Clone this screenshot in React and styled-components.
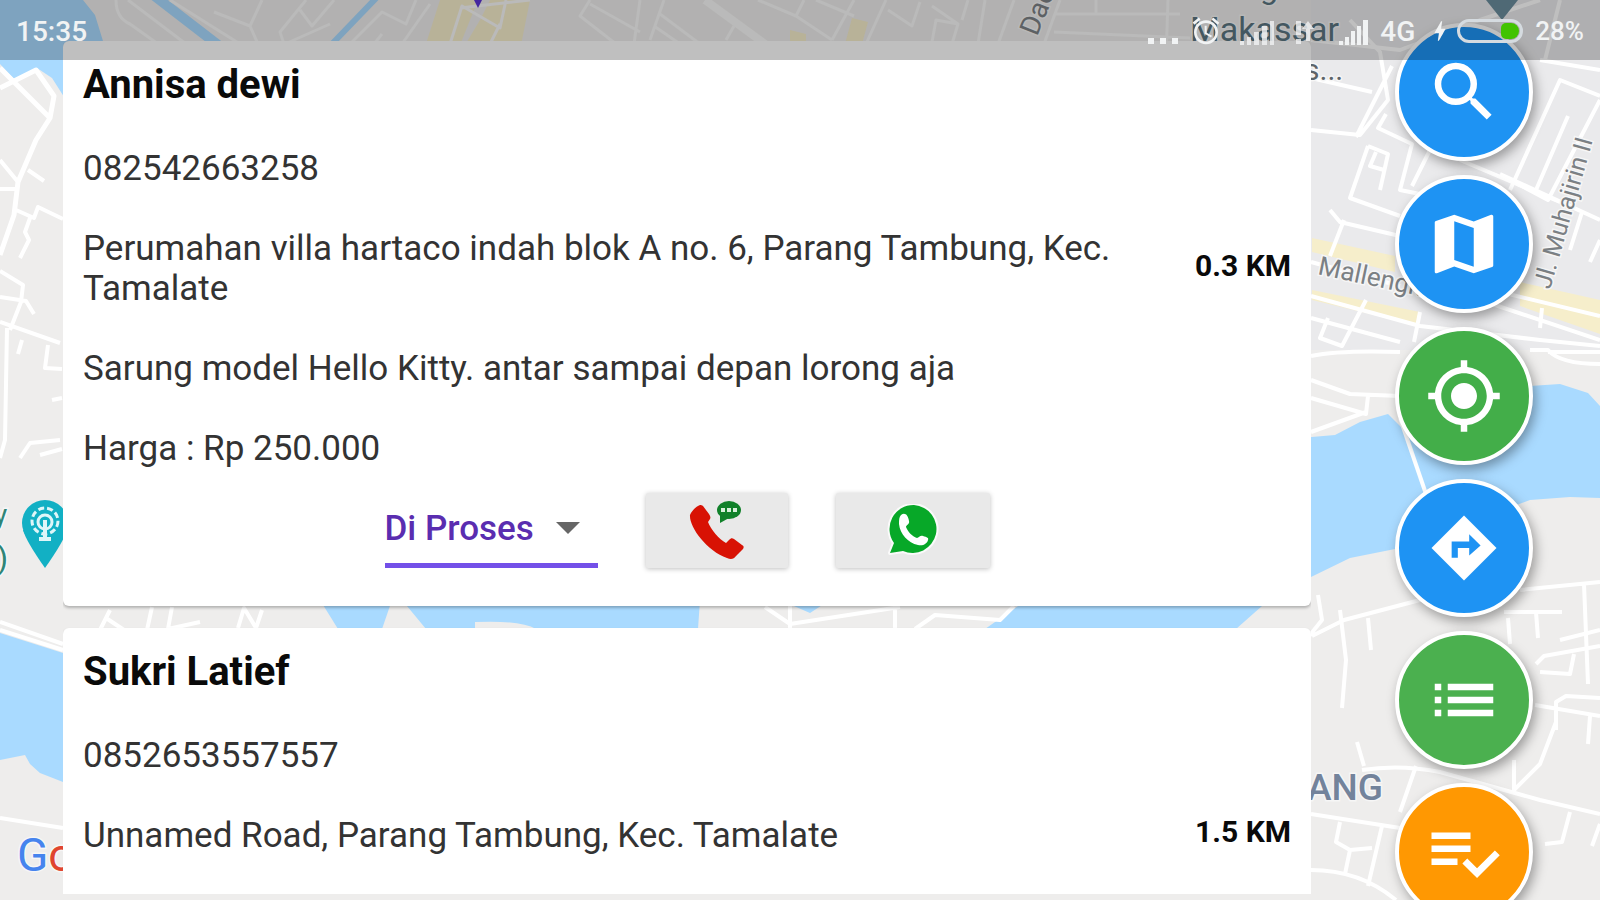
import React, { useState } from "react";
import styled, { createGlobalStyle } from "styled-components";
import {
  MdAccessAlarm,
  MdBolt,
  MdList,
  MdMap,
  MdMyLocation,
  MdSearch,
} from "react-icons/md";

const orders = [
  {
    id: 1,
    name: "Annisa dewi",
    phone: "082542663258",
    address:
      "Perumahan villa hartaco indah blok A no. 6, Parang Tambung, Kec. Tamalate",
    note: "Sarung model Hello Kitty. antar sampai depan lorong aja",
    price: "Harga : Rp 250.000",
    distance: "0.3 KM",
  },
  {
    id: 2,
    name: "Sukri Latief",
    phone: "0852653557557",
    address: "Unnamed Road, Parang Tambung, Kec. Tamalate",
    distance: "1.5 KM",
  },
];

const PlaylistCheckIcon = () => (
  <svg viewBox="0 0 24 24" fill="currentColor" aria-hidden="true">
    <path d="M14 10H2v2h12v-2zm0-4H2v2h12V6zM2 16h8v-2H2v2zm19.5-4.5L23 13l-6.99 7-4.51-4.5L13 14l3.01 3 5.49-5.5z" />
  </svg>
);

const DirectionsIcon = () => (
  <svg viewBox="0 0 24 24" fill="currentColor" aria-hidden="true">
    <path
      fillRule="evenodd"
      d="M12 2 L22 12 L12 22 L2 12 Z M13.6 14.3 L17.1 11.2 L13.6 7.8 V10 H8.2 V15 H10.1 V12 H13.6 Z"
    />
  </svg>
);

const PhoneIcon = () => (
  <svg width="56" height="62" viewBox="0 1 56 62" aria-hidden="true">
    <path
      d="M11 6 C8 7 3 11 1 16 C0 28 18 52 38 59 C42 61 45 60 47 57 L54 50 C55 48 55 47 53 46 L45 40 C43 39 42 39 40 41 L37 44 C30 40 22 31 19 23 L21 20 C22 18 21 17 20 15 L14 7 C13 6 12 6 11 6 Z"
      fill="#d81204"
    />
    <ellipse cx="40" cy="11" rx="12" ry="9" fill="#11812a" />
    <path d="M31 16 L31 24 L40 19 Z" fill="#11812a" />
    <g fill="#d9f0dc">
      <rect x="32" y="9" width="4" height="4" />
      <rect x="38" y="9" width="4" height="4" />
      <rect x="44" y="9" width="4" height="4" />
    </g>
  </svg>
);

const WhatsappIcon = () => (
  <svg width="54" height="54" viewBox="0 1 54 54" aria-hidden="true">
    <path
      d="M28 2 a24 24 0 1 1 -11 46 L4 50 L8 40 A24 24 0 0 1 28 2 Z"
      fill="#07a828"
      stroke="#fafafa"
      strokeWidth="4"
      strokeLinejoin="round"
      paintOrder="stroke"
    />
    <path
      d="M15 12 C19 9 22 12 23 18 C24 21 20 22 20 24 C22 29 26 33 31 35 C33 35 34 32 37 33 C41 34 43 35 42 37 C41 41 37 43 32 42 C22 40 14 31 13 21 C13 17 13 14 15 12 Z"
      fill="#fff"
    />
  </svg>
);

const MapView = () => (
  <MapCanvas viewBox="0 0 1600 900" preserveAspectRatio="xMidYMid slice" aria-hidden="true">
    <rect width="1600" height="900" fill="#eeedec" />
    <rect x="1311" width="289" height="350" fill="#eaeaec" />

    <g fill="#a9daff">
      <path d="M0 0 H83 L95 15 L103 41 V100 H66 L52 78 L37 68 L15 80 L0 64 Z" />
      <path d="M0 633 L63 653 V782 L40 773 L30 764 L25 755 L0 760 Z" />
      <path d="M1300 438 L1335 435 L1360 422 L1388 414 L1404 430 L1530 386 L1560 384 L1588 393 L1600 406 V498 L1570 497 L1530 500 L1400 548 L1350 558 L1311 577 H1300 Z" />
      <path d="M320 600 H392 L382 629 H338 Z" />
      <path d="M402 600 H700 L698 629 H536 Q520 620 475 622 V629 H426 Z" />
      <path d="M780 600 H830 L810 613 Z M1018 606 H1262 L1236 629 H985 Z" />
    </g>
    <g fill="none" stroke="#a9daff">
      <path d="M152 -6 L222 48" strokeWidth="10" />
      <path d="M382 -8 L330 46" strokeWidth="6" />
    </g>

    <g fill="#f6eecb">
      <path d="M440 0 H478 L458 50 H424 Z M490 0 H530 L520 50 H462 L480 20 Z" />
      <path d="M790 30 L806 34 V44 H790 Z M852 18 L868 22 L862 44 H845 Z" />
      <path d="M1312 238 L1395 256 V272 L1312 252 Z M1312 290 L1420 312 V326 L1312 300 Z" />
      <path d="M1520 282 L1600 300 V334 L1520 306 Z" />
    </g>

    <g fill="none" stroke="#fff" strokeWidth="4" strokeLinejoin="round">
      <path d="M0 68 L50 118 M0 88 L36 70 L54 96 L50 118 L36 140 L18 182 L14 215 L0 255" strokeWidth="5" />
      <path d="M0 160 L18 182 M0 189 H16 M28 170 L44 181 M16 210 L34 218 L38 207 L63 219 M30 218 L25 232 L29 240 L20 258" />
      <path d="M0 271 L23 285 L21 302 L10 330 M0 297 L26 301 L34 314 M0 322 L60 343 M7 328 L5 440 L0 458 M22 340 L18 354 M48 345 L45 368 L62 369" />
      <path d="M20 458 L30 443 L60 440 M40 455 L62 449 M52 400 L62 398" />
      <path d="M0 622 L63 644 M0 630 L63 650" />
      <path d="M0 818 L63 828 M110 610 L100 630 M106 618 L124 630 M152 607 L147 630 M172 607 L168 629 L200 622 M238 628 L244 608 L256 628 L262 610" />
      <path d="M765 607 L790 624 L900 607 M790 605 V628 M895 606 V629 M915 629 L935 615 L1000 620 L1014 606" />
      <path d="M1312 636 L1344 620 L1420 600 M1318 595 L1322 620 L1306 640" />
      <path d="M1340 610 L1346 660 L1342 708 M1368 618 L1371 650 M1357 742 L1364 766 M1311 814 L1400 828" />
      <path d="M1340 822 L1336 842 L1350 850 L1345 874 M1350 850 L1372 848 M1382 826 L1368 886 M1311 870 Q1360 870 1396 900" />
      <path d="M1362 770 Q1400 764 1440 772 L1540 800 L1600 814 M1416 766 L1400 812" />
      <path d="M1504 612 L1562 612 M1536 612 L1538 638 M1508 618 L1510 644 M1520 590 L1600 582 M1584 584 L1588 684" />
      <path d="M1560 640 L1600 630 M1536 664 L1544 656 L1600 646 M1540 672 L1570 674 L1574 654" />
      <path d="M1535 705 L1600 716 M1556 730 V702 L1566 696 L1600 698 M1590 716 L1588 744 M1556 722 L1540 764 L1514 790 V760" />
      <path d="M1570 812 L1562 842 L1545 844 M1600 824 L1592 846" />
      <path d="M1400 418 L1426 494" />
      <path d="M1311 130 L1360 135 L1388 100 L1380 52 L1350 20 M1356 137 L1392 66 M1311 78 L1372 92" />
      <path d="M1386 114 L1378 128 L1412 144 L1400 190 L1420 194 M1368 146 L1388 154 L1380 190 M1368 146 L1350 198 L1400 216" />
      <path d="M1376 152 L1370 166 L1384 170 M1330 210 L1340 222 L1400 236 M1344 220 L1330 256 M1430 150 L1412 186" />
      <path d="M1510 190 L1560 80 L1600 96 M1518 184 L1548 200 L1600 100 M1536 190 L1568 116 M1500 174 L1600 220 M1582 212 L1570 250" />
      <path d="M1460 160 L1560 202 M1600 240 L1590 262 M1311 262 L1400 286" />
      <path d="M1311 296 L1420 326 L1540 340 L1600 346 M1311 318 L1400 342 M1366 300 L1342 346 L1320 338 L1328 318 M1420 312 L1414 342" />
      <path d="M1311 356 Q1340 350 1400 352 M1311 380 L1350 394 L1400 396 M1368 396 L1366 414 L1311 398 M1311 432 L1366 412" />
      <path d="M1500 292 L1600 316 M1542 308 L1540 328 M1530 350 H1548 Q1560 364 1600 364 M1548 352 H1600" />
      <path d="M1480 300 L1600 340 M1311 40 L1400 50 L1480 20 L1540 0 M1540 60 L1600 70 M1560 0 L1545 60" />
    </g>

    {/* streets under the status bar */}
    <g fill="none" stroke="#f8f8f8" strokeWidth="3" strokeLinejoin="round">
      <path d="M116 0 Q116 18 130 24 L158 44 M170 0 L240 44 M128 0 L186 44 M214 12 L250 26 L262 0 M250 26 L258 44" />
      <path d="M306 0 L280 32 L284 44 M300 10 L312 26 L334 0 M330 24 L285 44 M350 44 L382 12 L406 24 L416 0 M430 4 L402 44 M374 44 L382 34" />
      <path d="M450 44 L462 6 L500 28 L506 0 M490 44 L500 24 M460 8 L530 0" />
      <path d="M590 0 L580 16 L616 44 M590 4 L640 32 M664 0 L650 40 M640 0 L634 44 M660 14 L700 44 M654 26 L680 44" />
      <path d="M705 0 L765 44" strokeWidth="8" />
      <path d="M758 0 L796 16 L832 40 M796 16 L804 0 M854 0 L832 40 M886 0 L866 44 M816 0 L854 16 M888 10 L912 26 L920 2 M726 40 L734 26" />
      <path d="M932 6 L958 24 L952 44 M958 24 L936 20 L932 42 L950 46 M968 0 L962 20 M985 0 L978 44 M1014 0 L998 44 M1060 0 L1044 44 M1056 14 H1180 M1054 32 L1190 38 M1096 0 V14 M1168 0 L1166 60" />
    </g>

    <path d="M474 0 H482 L478 8 Z" fill="#5b35d4" />
    <path d="M1486 0 H1518 L1502 20 Z" fill="#6a8c9c" />

    <circle cx="45" cy="523" r="23" fill="#12b0c4" />
    <path d="M23 530 Q26 541 45 568 Q64 541 67 530 Z" fill="#12b0c4" />
    <g fill="none" stroke="#dff6f8" strokeWidth="3">
      <circle cx="45" cy="521" r="13" strokeDasharray="6 3" />
      <circle cx="45" cy="522" r="7" />
      <path d="M45 520 V538 M39 539 H51" strokeWidth="4" />
    </g>

    <MapLabel x="-6" y="524" $size={28} $color="#2f8577">y</MapLabel>
    <MapLabel x="-3" y="569" $size={32} $color="#2f8577">)</MapLabel>
    <MapLabel x="1190" y="41" $size={34} $color="#5a7580">Makassar</MapLabel>
    <MapLabel x="1260" y="-1" $size={32} $color="#5a7580">g</MapLabel>
    <MapLabel x="1304" y="80" $size={30} $color="#5d6469">s...</MapLabel>
    <MapLabel x="1317" y="274" $size={26} $color="#7b8084" transform="rotate(12 1317 274)">
      Mallengk
    </MapLabel>
    <MapLabel x="1550" y="290" $size={25} $color="#7b8084" transform="rotate(-74 1550 290)">
      Jl. Muhajirin II
    </MapLabel>
    <MapLabel x="1037" y="37" $size={28} $color="#7d8286" transform="rotate(-68 1037 37)">
      Dae
    </MapLabel>
    <MapLabel x="1307" y="800" $size={37} $weight={500} $color="#73839b">ANG</MapLabel>
    <MapLabel x="17" y="871" $size={46} $color="#4684ee">
      G<tspan fill="#e0452f">o</tspan>
    </MapLabel>
  </MapCanvas>
);

const OrderCard = ({ order }) => {
  const [status, setStatus] = useState("Di Proses");

  return (
    <Card>
      <OrderBody>
        <Details>
          <Name>{order.name}</Name>
          <Line>{order.phone}</Line>
          <Line>{order.address}</Line>
          {order.note && <Line>{order.note}</Line>}
          {order.price && <Line>{order.price}</Line>}
        </Details>
        <Distance>{order.distance}</Distance>
      </OrderBody>
      {order.price && (
        <Actions>
          <StatusField>
            <StatusSelect
              aria-label="Status"
              value={status}
              onChange={(e) => setStatus(e.target.value)}
            >
              <option>Di Proses</option>
            </StatusSelect>
            <Caret />
          </StatusField>
          <ContactButton $width={142} aria-label="Telepon">
            <PhoneIcon />
          </ContactButton>
          <ContactButton $width={154} aria-label="WhatsApp">
            <WhatsappIcon />
          </ContactButton>
        </Actions>
      )}
    </Card>
  );
};

const App = () => {
  return (
    <Screen>
      <GlobalStyle />
      <MapView />
      <OrderList>
        {orders.map((order) => (
          <OrderCard key={order.id} order={order} />
        ))}
      </OrderList>
      <FabColumn>
        <Fab $color="#1e93f3" aria-label="Cari"><MdSearch /></Fab>
        <Fab $color="#1e93f3" aria-label="Peta"><MdMap /></Fab>
        <Fab $color="#43ae49" aria-label="Lokasi saya"><MdMyLocation /></Fab>
        <Fab $color="#1e93f3" aria-label="Rute"><DirectionsIcon /></Fab>
        <Fab $color="#4bb04f" aria-label="Daftar"><MdList /></Fab>
        <Fab $color="#ff9802" aria-label="Selesai"><PlaylistCheckIcon /></Fab>
      </FabColumn>
      <StatusBar>
        <Clock>15:35</Clock>
        <StatusIcons>
          <svg width="30" height="28" viewBox="0 0 30 28" fill="currentColor" aria-hidden="true">
            <rect x="0" y="21" width="6" height="6" />
            <rect x="12" y="21" width="6" height="6" />
            <rect x="24" y="21" width="6" height="6" />
          </svg>
          <MdAccessAlarm size={32} />
          <svg width="134" height="28" viewBox="-6 0 134 28" fill="currentColor" aria-hidden="true">
            <path d="M0 24h4v4h-4zM7 20h4v8h-4zM14 15h5v13h-5zM22 9h5v19h-5zM30 4h4v24h-4z" opacity=".8" />
            <path d="M56 4h5v14h-5zM56 22h5v5h-5zM68 4l6 8h-4v12h-4V12h-4z" opacity=".8" />
            <path d="M99 24h4v4h-4zM105 20h4v8h-4zM111 14h4v14h-4zM117 9h4v19h-4zM123 3h5v25h-5z" />
          </svg>
          <Network>4G</Network>
          <ChargeGroup>
            <MdBolt size={26} />
            <Battery><BatteryLevel /></Battery>
          </ChargeGroup>
          <Percent>28%</Percent>
        </StatusIcons>
      </StatusBar>
    </Screen>
  );
};

export default App;

const GlobalStyle = createGlobalStyle`
  * {
    box-sizing: border-box;
  }

  body {
    margin: 0;
    font-family: Roboto, "Liberation Sans", sans-serif;
  }
`;

const Screen = styled.div`
  position: relative;
  display: flex;
  height: 100vh;
  overflow: hidden;
`;

const MapCanvas = styled.svg`
  position: absolute;
  inset: 0;
  width: 100%;
  height: 100%;
`;

const MapLabel = styled.text`
  font-size: ${({ $size }) => $size}px;
  font-weight: ${({ $weight }) => $weight || 400};
  fill: ${({ $color }) => $color};
  stroke: #f6f6f6;
  stroke-width: 3px;
  paint-order: stroke;
`;

const StatusBar = styled.header`
  position: absolute;
  inset: 0 0 auto;
  display: flex;
  align-items: center;
  justify-content: space-between;
  height: 60px;
  padding: 2px 16px 0;
  background: rgba(0, 0, 0, 0.25);
  color: #f1f3f4;
  font-size: 28px;
  font-weight: 500;
`;

const Clock = styled.time``;

const StatusIcons = styled.div`
  display: flex;
  align-items: center;
  gap: 12px;
`;

const Network = styled.span``;

const Percent = styled.span`
  font-size: 26px;
`;

const ChargeGroup = styled.div`
  display: flex;
  align-items: center;
  gap: 4px;
`;

const Battery = styled.div`
  display: flex;
  justify-content: flex-end;
  width: 66px;
  height: 24px;
  padding: 1px;
  border: 3px solid #d5dbe0;
  border-radius: 12px;
`;

const BatteryLevel = styled.div`
  width: 32%;
  background: #41c300;
  border-radius: 5px 8px 8px 5px;
`;

const OrderList = styled.main`
  position: relative;
  flex: 1;
  display: flex;
  flex-direction: column;
  gap: 22px;
  margin: 41px 0 6px 63px;
  overflow: hidden;
`;

const Card = styled.article`
  flex-shrink: 0;
  padding: 20px;
  background: #fff;
  border-radius: 6px;
  box-shadow: 0 2px 3px rgba(0, 0, 0, 0.25);
`;

const OrderBody = styled.div`
  display: flex;
  align-items: center;
  justify-content: space-between;
  min-height: 366px;
`;

const Details = styled.div`
  display: flex;
  flex-direction: column;
  align-self: flex-start;
  gap: 40px;
  max-width: 1080px;
  color: #333;
  font-size: 35px;
  line-height: 40px;
`;

const Name = styled.h2`
  margin: 0;
  color: #0a0a0a;
  font-size: 40px;
  font-weight: 700;
  line-height: 48px;
`;

const Line = styled.p`
  margin: 0;
`;

const Distance = styled.strong`
  flex-shrink: 0;
  color: #0a0a0a;
  font-size: 30px;
  font-weight: 700;
`;

const Actions = styled.div`
  display: flex;
  justify-content: center;
  gap: 48px;
  margin: 24px 0 18px;
`;

const StatusField = styled.div`
  display: flex;
  align-items: center;
  width: 213px;
  height: 75px;
  border-bottom: 5px solid #7350e8;
`;

const StatusSelect = styled.select`
  flex: 1;
  height: 70px;
  padding: 0;
  border: 0;
  outline: 0;
  background: transparent;
  appearance: none;
  color: #5a2db0;
  font: 500 35px Roboto, sans-serif;
`;

const Caret = styled.span`
  margin-right: 18px;
  border: 12px solid transparent;
  border-top-color: #666;
  border-bottom: 0;
  pointer-events: none;
`;

const ContactButton = styled.button`
  display: grid;
  place-items: center;
  width: ${({ $width }) => $width}px;
  height: 75px;
  padding: 0;
  border: 0;
  border-radius: 2px;
  background: #e9e9e9;
  box-shadow: 0 1px 5px rgba(0, 0, 0, 0.25);
`;

const FabColumn = styled.nav`
  position: relative;
  display: flex;
  flex-direction: column;
  gap: 14px;
  margin: 23px 67px 0 84px;
`;

const Fab = styled.button`
  display: grid;
  flex-shrink: 0;
  place-items: center;
  width: 138px;
  height: 138px;
  padding: 0;
  border: 4px solid #fff;
  border-radius: 50%;
  background: ${({ $color }) => $color};
  box-shadow: 3px 5px 12px rgba(0, 0, 0, 0.35);
  color: #fff;

  svg {
    width: 78px;
    height: 78px;
  }
`;
